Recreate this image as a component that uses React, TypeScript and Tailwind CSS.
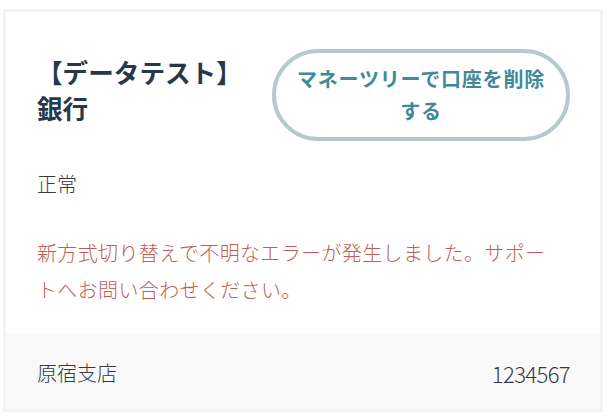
const FONT = "font-['Noto_Sans_CJK_JP','Noto_Sans',sans-serif]"

export default function App() {
  return (
    <div className={`h-[420px] w-[610px] bg-white pl-[3px] pt-[9px] ${FONT}`}>
      <div className="w-[600px] border-[3px] border-[#f3f3f3] bg-white">
        {/* Header: bank name + delete button */}
        <div className="flex items-start justify-between pl-[31px] pr-[30px] pt-[37px]">
          <h2 className="mt-[5px] w-[215px] text-[25.6px] font-bold leading-[36px] text-[#26394a]">
            【データテスト】銀行
          </h2>
          <button
            type="button"
            className="flex h-[92px] w-[298px] items-center justify-center rounded-full border-4 border-[#b7c9cc] px-[20px] text-center text-[20px] font-bold leading-[32px] tracking-[0.8px] text-[#3f8a99]"
          >
            マネーツリーで口座を削除する
          </button>
        </div>

        {/* Status */}
        <div className="px-[31px] font-light">
          <p className="mt-[25px] text-[20px] leading-[36px] text-[#3a3a3a]">正常</p>
          <p className="mb-[25px] mt-[32px] max-w-[520px] text-[20px] leading-[37px] tracking-[0.36px] text-[#c25d55]">
            新方式切り替えで不明なエラーが発生しました。サポートへお問い合わせください。
          </p>
        </div>

        {/* Footer: branch + account number */}
        <div className="flex h-[76px] items-center justify-between bg-[#f9f9f9] pl-[31px] pr-[30px] pt-[4px] font-light text-[#333a44]">
          <span className="text-[20px]">原宿支店</span>
          <span className="text-[22px] tracking-[-0.6px]">1234567</span>
        </div>
      </div>
    </div>
  )
}
